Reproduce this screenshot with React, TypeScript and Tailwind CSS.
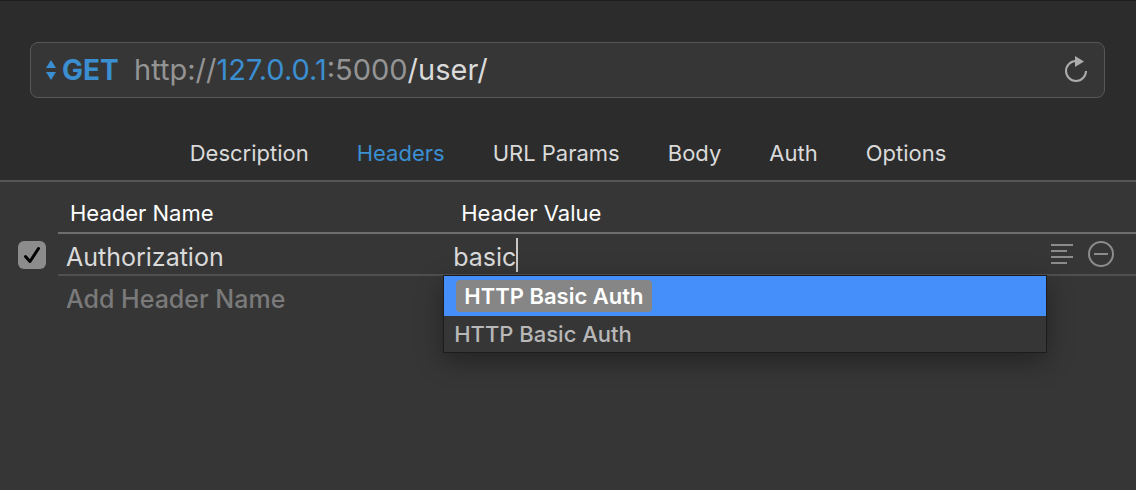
import { useState } from "react";

const tabs = ["Description", "Headers", "URL Params", "Body", "Auth", "Options"];

function MethodArrows() {
  return (
    <svg width="10" height="20" viewBox="0 0 10 20" fill="#3b8ed0" aria-hidden="true">
      <path d="M5 0 10 8H0Z" />
      <path d="M0 12H10L5 20Z" />
    </svg>
  );
}

function ReloadIcon() {
  return (
    <svg width="24" height="28" viewBox="0 0 24 28" aria-hidden="true">
      <path d="M12 5A10 10 0 1 0 22 15" fill="none" stroke="#adadad" strokeWidth="2" />
      <path d="M11 0 20 5.500 11 11Z" fill="#adadad" />
    </svg>
  );
}

function LinesIcon() {
  return (
    <svg width="22" height="20" viewBox="0 0 22 20" fill="#8c8c8c" aria-hidden="true">
      <path d="M0 0H22V2H0ZM0 6H16V8H0ZM0 12H22V14H0ZM0 18H16V20H0Z" />
    </svg>
  );
}

function RemoveIcon() {
  return (
    <svg width="26" height="26" viewBox="0 0 26 26" fill="none" stroke="#8c8c8c" strokeWidth="2" aria-hidden="true">
      <circle cx="13" cy="13" r="12" />
      <path d="M6 13H20" />
    </svg>
  );
}

function RequestBar() {
  return (
    <div className="mr-[31px] ml-[30px] flex h-14 items-center rounded-lg border border-[#575757] bg-[#363636] pr-4 pl-[15px] text-[29px]">
      <label className="flex items-center gap-1.5">
        <MethodArrows />
        <select
          aria-label="Method"
          className="w-[72px] appearance-none bg-transparent text-[28px] font-bold text-[#3b8ed0] outline-none"
        >
          <option>GET</option>
        </select>
      </label>
      <div
        role="textbox"
        aria-label="URL"
        contentEditable
        suppressContentEditableWarning
        spellCheck={false}
        className="min-w-0 flex-1 whitespace-nowrap text-[#949494] outline-none"
      >
        http://<span className="text-[#3b8ed0]">127.0.0.1</span>:5000
        <span className="text-[#dadada]">/user/</span>
      </div>
      <button type="button" aria-label="Reload">
        <ReloadIcon />
      </button>
    </div>
  );
}

function Suggestions() {
  return (
    <ul
      role="listbox"
      aria-label="Suggestions"
      className="absolute top-full -right-px -left-px z-10 mt-px border border-[#1c1c1c] bg-[#363636] text-[22px] font-medium shadow-[0_8px_24px_rgba(0,0,0,0.35)]"
    >
      <li role="option" aria-selected="true" className="flex h-10 items-center bg-[#448ffa] pl-3 text-white">
        <span className="flex h-8 items-center rounded-[4px] bg-[#868686] px-2 font-semibold">HTTP Basic Auth</span>
      </li>
      <li role="option" aria-selected="false" className="flex h-9 items-center pl-2.5 text-[#b8b8b8]">
        HTTP Basic Auth
      </li>
    </ul>
  );
}

export default function App() {
  const [active, setActive] = useState("Headers");
  const [enabled, setEnabled] = useState(true);
  const [name, setName] = useState("Authorization");
  const [value, setValue] = useState("basic");

  return (
    <div className="min-h-screen bg-[#363636] font-['Inter',sans-serif] text-[#dadada]">
      <header className="border-t border-b-2 border-t-[#1c1c1c] border-b-[#555555] bg-[#2c2c2c] pt-[41px]">
        <RequestBar />
        <nav className="flex h-[82px] items-center justify-center gap-12 pt-7 text-[22px]">
          {tabs.map((tab) => (
            <button
              key={tab}
              type="button"
              onClick={() => setActive(tab)}
              className={tab === active ? "text-[#3b8ed0]" : "text-[#dadada]"}
            >
              {tab}
            </button>
          ))}
        </nav>
      </header>

      <table className="w-full table-fixed border-separate border-spacing-0">
        <colgroup>
          <col className="w-[58px]" />
          <col className="w-[34%]" />
          <col />
          <col className="w-[90px]" />
        </colgroup>
        <thead className="text-left text-[22px] text-white">
          <tr className="h-[52px]">
            <td />
            <th className="border-b-2 border-[#6e6e6e] px-3 pt-3 pb-0 font-normal">Header Name</th>
            <th className="border-b-2 border-[#6e6e6e] px-[17px] pt-3 pb-0 font-normal">Header Value</th>
            <td className="border-b-2 border-[#6e6e6e]" />
          </tr>
        </thead>
        <tbody className="text-[25px]">
          <tr className="h-[42px]">
            <td className="p-0">
              <label className="relative ml-[18px] block size-7">
                <input
                  type="checkbox"
                  aria-label="Enable header"
                  checked={enabled}
                  onChange={(e) => setEnabled(e.target.checked)}
                  className="block size-7 appearance-none rounded-md bg-[#8c8c8c]"
                />
                {enabled && (
                  <svg
                    className="pointer-events-none absolute inset-0"
                    viewBox="0 0 28 28"
                    fill="none"
                    stroke="#000"
                    strokeWidth="3"
                    strokeLinecap="round"
                    strokeLinejoin="round"
                    aria-hidden="true"
                  >
                    <path d="M7.500 15.500 12 20.500 20.500 7.500" />
                  </svg>
                )}
              </label>
            </td>
            <td className="border-b-2 border-[#505050] px-2 pt-2 pb-0">
              <input
                aria-label="Header name"
                value={name}
                onChange={(e) => setName(e.target.value)}
                className="block h-8 w-full bg-transparent outline-none"
              />
            </td>
            <td className="relative border-b-2 border-[#505050] px-[9px] pt-2 pb-0">
              <input
                aria-label="Header value"
                value={value}
                onChange={(e) => setValue(e.target.value)}
                className="block h-8 w-full bg-transparent caret-transparent outline-none"
              />
              <span className="absolute top-1 left-[72px] h-[34px] w-0.5 bg-[#c8c8c8]" />
              <Suggestions />
            </td>
            <td className="border-b-2 border-[#505050] p-0">
              <div className="flex items-center gap-[15px] pl-[5px]">
                <button type="button" aria-label="Edit as text">
                  <LinesIcon />
                </button>
                <button type="button" aria-label="Remove header">
                  <RemoveIcon />
                </button>
              </div>
            </td>
          </tr>
          <tr>
            <td />
            <td className="px-2 pt-1 pb-0">
              <input
                aria-label="Add header name"
                placeholder="Add Header Name"
                className="block h-[38px] w-full bg-transparent font-medium outline-none placeholder:text-[#7a7a7a]"
              />
            </td>
            <td />
            <td />
          </tr>
        </tbody>
      </table>
    </div>
  );
}
